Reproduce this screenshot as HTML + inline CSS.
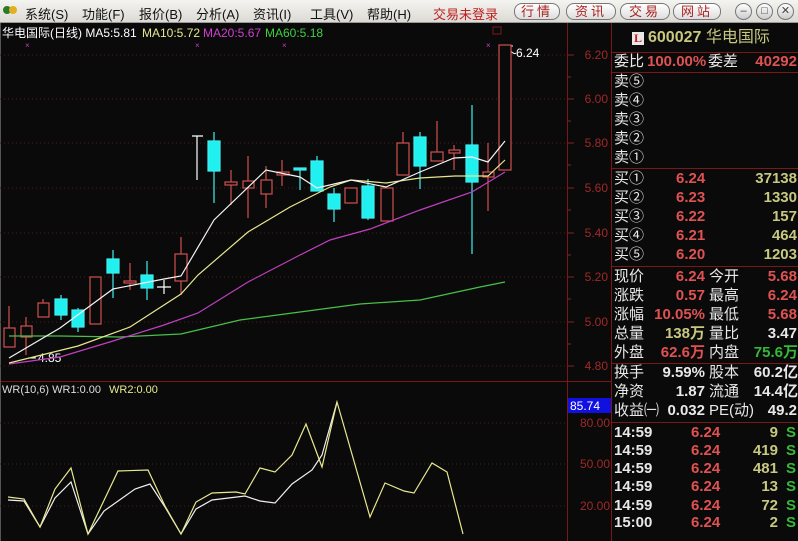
<!DOCTYPE html>
<html><head><meta charset="utf-8"><style>
*{margin:0;padding:0;box-sizing:border-box}
body{width:798px;height:541px;overflow:hidden;background:#0a0a0a;font-family:"Liberation Sans","Noto Sans CJK SC",sans-serif;position:relative}
.menu{position:absolute;left:0;top:0;width:798px;height:23px;background:linear-gradient(#f4f4f0,#dcdad4);border-bottom:1px solid #999}
.mi{position:absolute;top:4px;font-size:13px;color:#111}
.btn{position:absolute;top:3px;height:17px;border:1px solid #777;border-radius:8px;background:linear-gradient(#fff,#ddd);font-size:13px;color:#a22;line-height:15px;text-align:center;letter-spacing:3px}
.circ{position:absolute;top:3px;width:17px;height:17px;border:1px solid #777;border-radius:50%;background:linear-gradient(#fff,#ccc);font-size:11px;line-height:15px;text-align:center;color:#444}
.t{position:absolute;font-size:15px;white-space:nowrap;line-height:16px}
.w{color:#e8e8e8}.r{color:#e05252}.y{color:#c8c880}.g{color:#36b836}
.b{font-weight:bold}
.rt{text-align:right}
</style></head><body>
<div class="menu">
<div style="position:absolute;left:3px;top:6px;width:8px;height:8px;border-radius:50%;background:#2a7a2a"></div>
<div style="position:absolute;left:9px;top:6px;width:8px;height:8px;border-radius:50%;background:#e0b020"></div>
<div class="mi" style="left:25px">系统(S)</div>
<div class="mi" style="left:82px">功能(F)</div>
<div class="mi" style="left:139px">报价(B)</div>
<div class="mi" style="left:196px">分析(A)</div>
<div class="mi" style="left:253px">资讯(I)</div>
<div class="mi" style="left:310px">工具(V)</div>
<div class="mi" style="left:367px">帮助(H)</div>
<div class="mi" style="left:433px;color:#c02020">交易未登录</div>
<div class="btn" style="left:514px;width:46px">行情</div>
<div class="btn" style="left:566px;width:50px">资讯</div>
<div class="btn" style="left:620px;width:50px">交易</div>
<div class="btn" style="left:673px;width:48px">网站</div>
<div class="circ" style="left:735px">–</div>
<div class="circ" style="left:756px">□</div>
<div class="circ" style="left:777px">✕</div>
</div>

<svg style="position:absolute;left:0;top:23px" width="798" height="518" viewBox="0 23 798 518">
<g stroke="#7a1818" stroke-width="1" fill="none">
<line x1="567.5" y1="23" x2="567.5" y2="541"/>
<line x1="611.5" y1="23" x2="611.5" y2="541"/>
<line x1="0" y1="381.5" x2="611" y2="381.5"/>
<line x1="611" y1="52.5" x2="798" y2="52.5"/>
<line x1="611" y1="72.5" x2="798" y2="72.5"/>
<line x1="611" y1="168.5" x2="798" y2="168.5"/>
<line x1="611" y1="266.5" x2="798" y2="266.5"/>
<line x1="611" y1="363.5" x2="798" y2="363.5"/>
<line x1="611" y1="422.5" x2="798" y2="422.5"/>
<line x1="0.5" y1="23" x2="0.5" y2="541" stroke="#555"/>
<rect x="493" y="27" width="8" height="7"/>
</g>
<g stroke="#4a1c1c" stroke-dasharray="1,3">
<line x1="0" y1="55" x2="566" y2="55"/><line x1="0" y1="99" x2="566" y2="99"/><line x1="0" y1="143" x2="566" y2="143"/><line x1="0" y1="188" x2="566" y2="188"/><line x1="0" y1="233" x2="566" y2="233"/><line x1="0" y1="277" x2="566" y2="277"/><line x1="0" y1="322" x2="566" y2="322"/><line x1="0" y1="366" x2="566" y2="366"/>
<line x1="0" y1="423" x2="566" y2="423"/><line x1="0" y1="464" x2="566" y2="464"/><line x1="0" y1="506" x2="566" y2="506"/>
</g>
<g stroke="#8a2020">
<line x1="568" y1="55" x2="574" y2="55"/><line x1="568" y1="99" x2="574" y2="99"/><line x1="568" y1="143" x2="574" y2="143"/><line x1="568" y1="188" x2="574" y2="188"/><line x1="568" y1="233" x2="574" y2="233"/><line x1="568" y1="277" x2="574" y2="277"/><line x1="568" y1="322" x2="574" y2="322"/><line x1="568" y1="366" x2="574" y2="366"/>
<line x1="568" y1="77" x2="571" y2="77"/><line x1="568" y1="121" x2="571" y2="121"/><line x1="568" y1="165" x2="571" y2="165"/><line x1="568" y1="210" x2="571" y2="210"/><line x1="568" y1="255" x2="571" y2="255"/><line x1="568" y1="299" x2="571" y2="299"/><line x1="568" y1="344" x2="571" y2="344"/>
</g>
<g font-family="Liberation Sans,sans-serif" font-size="12" fill="#a02828" text-anchor="end">
<text x="608" y="59">6.20</text><text x="608" y="103">6.00</text><text x="608" y="147">5.80</text><text x="608" y="192">5.60</text><text x="608" y="237">5.40</text><text x="608" y="281">5.20</text><text x="608" y="326">5.00</text><text x="608" y="370">4.80</text>
<text x="610" y="427">80.00</text><text x="610" y="468">50.00</text><text x="610" y="510">20.00</text>
</g>
<rect x="568" y="398" width="43" height="15" fill="#1010e0"/>
<text x="570" y="410" font-family="Liberation Sans,sans-serif" font-size="12" fill="#fff">85.74</text>
<g font-family="Liberation Sans,Noto Sans CJK SC,sans-serif" font-size="12">
<text x="2" y="37" fill="#fff">华电国际(日线) MA5:5.81</text>
<text x="142" y="37" fill="#e8e890">MA10:5.72</text>
<text x="203" y="37" fill="#d040d0">MA20:5.67</text>
<text x="265" y="37" fill="#40d040">MA60:5.18</text>
<text x="2" y="393" fill="#ddd" font-size="11">WR(10,6) WR1:0.00</text>
<text x="109" y="393" fill="#e8e890" font-size="11">WR2:0.00</text>
<text x="516" y="57" fill="#fff">6.24</text>
<text x="38" y="362" fill="#fff">4.85</text>
</g>
<g fill="#c040c0" font-size="8" font-family="Liberation Sans"><text x="25" y="48">×</text><text x="195" y="48">×</text><text x="282" y="48">×</text><text x="486" y="48">×</text></g>
<path d="M513 46 L506 46 M510 50 Q514 55 516 53" stroke="#fff" fill="none"/>
<path d="M28 358 L36 358" stroke="#fff"/>
<g stroke="#d05050" fill="#0a0a0a" stroke-width="1.2">
<line x1="9" y1="306" x2="9" y2="347"/><rect x="4" y="328" width="11" height="19"/>
<line x1="26" y1="317" x2="26" y2="355"/><rect x="21" y="326" width="11" height="11"/>
<line x1="43" y1="299" x2="43" y2="317"/><rect x="38" y="303" width="11" height="14"/>
<rect x="90" y="277" width="11" height="47"/>
<line x1="130" y1="263" x2="130" y2="290"/><rect x="124" y="281" width="12" height="2"/>
<line x1="181" y1="237" x2="181" y2="295"/><rect x="175" y="254" width="12" height="27"/>
<line x1="231" y1="170" x2="231" y2="205"/><rect x="225" y="182" width="12" height="3"/>
<line x1="248" y1="156" x2="248" y2="218"/><rect x="243" y="181" width="11" height="7"/>
<line x1="266" y1="166" x2="266" y2="208"/><rect x="261" y="180" width="11" height="14"/>
<line x1="282" y1="160" x2="282" y2="186"/><rect x="277" y="172" width="12" height="3"/>
<rect x="345" y="188" width="12" height="15"/>
<rect x="381" y="188" width="12" height="33"/>
<line x1="403" y1="132" x2="403" y2="175"/><rect x="397" y="143" width="12" height="32"/>
<line x1="437" y1="121" x2="437" y2="161"/><rect x="431" y="152" width="12" height="9"/>
<line x1="454" y1="145" x2="454" y2="170"/><rect x="449" y="150" width="11" height="3"/>
<line x1="488" y1="143" x2="488" y2="211"/><rect x="483" y="172" width="11" height="5"/>
<rect x="499" y="45" width="12" height="125"/>
</g>
<g stroke="#40f0f0" fill="#20f0f0" stroke-width="1.2">
<line x1="61" y1="295" x2="61" y2="320"/><rect x="55" y="299" width="12" height="16"/>
<line x1="78" y1="308" x2="78" y2="332"/><rect x="72" y="310" width="12" height="17"/>
<line x1="113" y1="250" x2="113" y2="298"/><rect x="107" y="259" width="12" height="14"/>
<line x1="147" y1="261" x2="147" y2="300"/><rect x="141" y="275" width="12" height="13"/>
<line x1="214" y1="132" x2="214" y2="203"/><rect x="208" y="141" width="12" height="30"/>
<line x1="300" y1="169" x2="300" y2="190"/><rect x="294" y="168" width="12" height="2"/>
<line x1="317" y1="156" x2="317" y2="191"/><rect x="311" y="161" width="12" height="30"/>
<line x1="334" y1="188" x2="334" y2="222"/><rect x="328" y="194" width="12" height="15"/>
<line x1="368" y1="179" x2="368" y2="220"/><rect x="362" y="186" width="12" height="32"/>
<line x1="420" y1="132" x2="420" y2="189"/><rect x="414" y="137" width="12" height="29"/>
<line x1="472" y1="105" x2="472" y2="254"/><rect x="466" y="145" width="12" height="37"/>
</g>
<path d="M192 136 L203 136 M197 136 L197 180 M157 287 L171 287 M164 280 L164 294" stroke="#fff" stroke-width="1.2"/>
<g fill="none" stroke-width="1.2">
<polyline stroke="#48c048" points="9,336 60,336 120,337 181,334 240,320 300,312 360,304 420,300 480,287 505,282"/>
<polyline stroke="#c040c0" points="9,364 60,357 113,341 164,325 198,313 248,282 300,255 330,240 370,229 420,210 472,192 505,172"/>
<polyline stroke="#e8e890" points="9,363 78,346 130,327 181,294 198,275 248,232 290,207 330,187 351,180 386,183 420,178 455,176 488,176 505,160"/>
<polyline stroke="#f4f4f4" points="9,358 60,328 113,289 164,279 181,276 214,220 266,170 300,177 317,188 351,180 386,187 420,172 437,165 454,158 472,157 488,162 505,141"/>
<polyline stroke="#f0f0f0" points="8,500 24,501 40,527 55,498 71,482 88,534 104,511 135,489 150,484 165,507 181,534 196,509 212,500 245,496 260,501 275,503 292,484 312,470 322,455 337,402"/>
<polyline stroke="#e8e890" points="8,497 24,499 40,527 55,489 71,468 88,534 118,471 148,470 165,506 181,534 196,502 212,493 236,492 245,494 260,468 275,472 292,455 306,424 322,467 337,402 370,517 385,483 404,491 414,493 432,463 447,472 463,534"/>
</g>
</svg>

<div style="position:absolute;left:632px;top:32px;width:12px;height:13px;background:#e8e8e8;color:#c02020;font:bold 12px 'Liberation Serif',serif;text-align:center;line-height:13px">L</div>
<div class="t" style="left:648px;top:30px;font-size:16px"><span class="y b">600027</span> <span class="y">华电国际</span></div>

<div class="t w" style="left:614px;top:54px">委比</div><div class="t r b" style="left:647px;top:54px">100.00%</div><div class="t w" style="left:708px;top:54px">委差</div><div class="t r b rt" style="right:1px;top:54px">40292</div>
<div class="t w" style="left:614px;top:74px">卖⑤</div>
<div class="t w" style="left:614px;top:93px">卖④</div>
<div class="t w" style="left:614px;top:112px">卖③</div>
<div class="t w" style="left:614px;top:131px">卖②</div>
<div class="t w" style="left:614px;top:150px">卖①</div>

<div class="t w" style="left:614px;top:171px">买①</div><div class="t r b" style="left:676px;top:171px">6.24</div><div class="t y b rt" style="right:1px;top:171px">37138</div>
<div class="t w" style="left:614px;top:190px">买②</div><div class="t r b" style="left:676px;top:190px">6.23</div><div class="t y b rt" style="right:1px;top:190px">1330</div>
<div class="t w" style="left:614px;top:209px">买③</div><div class="t r b" style="left:676px;top:209px">6.22</div><div class="t y b rt" style="right:1px;top:209px">157</div>
<div class="t w" style="left:614px;top:228px">买④</div><div class="t r b" style="left:676px;top:228px">6.21</div><div class="t y b rt" style="right:1px;top:228px">464</div>
<div class="t w" style="left:614px;top:247px">买⑤</div><div class="t r b" style="left:676px;top:247px">6.20</div><div class="t y b rt" style="right:1px;top:247px">1203</div>

<div class="t w" style="left:614px;top:269px">现价</div><div class="t r b rt" style="right:93px;top:269px">6.24</div><div class="t w" style="left:709px;top:269px">今开</div><div class="t r b rt" style="right:1px;top:269px">5.68</div>
<div class="t w" style="left:614px;top:288px">涨跌</div><div class="t r b rt" style="right:93px;top:288px">0.57</div><div class="t w" style="left:709px;top:288px">最高</div><div class="t r b rt" style="right:1px;top:288px">6.24</div>
<div class="t w" style="left:614px;top:307px">涨幅</div><div class="t r b rt" style="right:93px;top:307px">10.05%</div><div class="t w" style="left:709px;top:307px">最低</div><div class="t r b rt" style="right:1px;top:307px">5.68</div>
<div class="t w" style="left:614px;top:326px">总量</div><div class="t y b rt" style="right:93px;top:326px">138万</div><div class="t w" style="left:709px;top:326px">量比</div><div class="t w b rt" style="right:1px;top:326px">3.47</div>
<div class="t w" style="left:614px;top:345px">外盘</div><div class="t r b rt" style="right:93px;top:345px">62.6万</div><div class="t w" style="left:709px;top:345px">内盘</div><div class="t g b rt" style="right:0px;top:345px">75.6万</div>

<div class="t w" style="left:614px;top:365px">换手</div><div class="t w b rt" style="right:93px;top:365px">9.59%</div><div class="t w" style="left:709px;top:365px">股本</div><div class="t w b rt" style="right:0px;top:365px">60.2亿</div>
<div class="t w" style="left:614px;top:384px">净资</div><div class="t w b rt" style="right:93px;top:384px">1.87</div><div class="t w" style="left:709px;top:384px">流通</div><div class="t w b rt" style="right:0px;top:384px">14.4亿</div>
<div class="t w" style="left:614px;top:403px">收益㈠</div><div class="t w b rt" style="right:93px;top:403px">0.032</div><div class="t w" style="left:709px;top:403px">PE(动)</div><div class="t w b rt" style="right:1px;top:403px">49.2</div>

<div class="t w b" style="left:614px;top:425px">14:59</div><div class="t r b" style="left:691px;top:425px">6.24</div><div class="t y b rt" style="right:20px;top:425px">9</div><div class="t g b" style="left:786px;top:425px">S</div>
<div class="t w b" style="left:614px;top:443px">14:59</div><div class="t r b" style="left:691px;top:443px">6.24</div><div class="t y b rt" style="right:20px;top:443px">419</div><div class="t g b" style="left:786px;top:443px">S</div>
<div class="t w b" style="left:614px;top:461px">14:59</div><div class="t r b" style="left:691px;top:461px">6.24</div><div class="t y b rt" style="right:20px;top:461px">481</div><div class="t g b" style="left:786px;top:461px">S</div>
<div class="t w b" style="left:614px;top:479px">14:59</div><div class="t r b" style="left:691px;top:479px">6.24</div><div class="t y b rt" style="right:20px;top:479px">13</div><div class="t g b" style="left:786px;top:479px">S</div>
<div class="t w b" style="left:614px;top:498px">14:59</div><div class="t r b" style="left:691px;top:498px">6.24</div><div class="t y b rt" style="right:20px;top:498px">72</div><div class="t g b" style="left:786px;top:498px">S</div>
<div class="t w b" style="left:614px;top:515px">15:00</div><div class="t r b" style="left:691px;top:515px">6.24</div><div class="t y b rt" style="right:20px;top:515px">2</div><div class="t g b" style="left:786px;top:515px">S</div>
</body></html>
